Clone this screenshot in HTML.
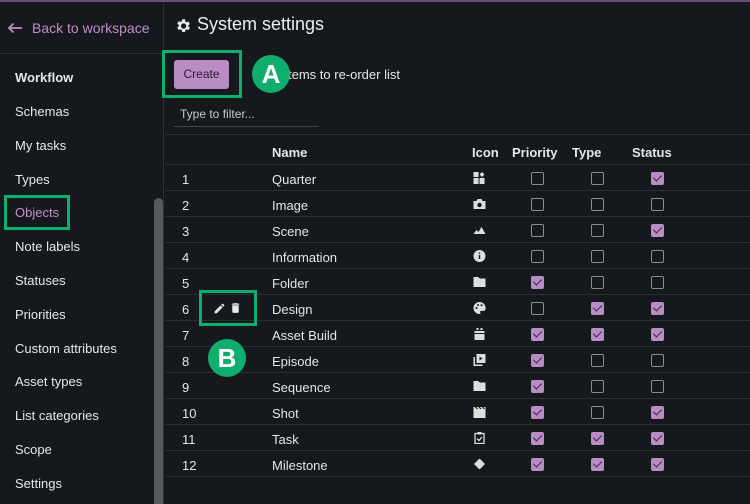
<!DOCTYPE html>
<html><head><style>
*{box-sizing:border-box;margin:0;padding:0}
body{width:750px;height:504px;background:#15181c;font-family:"Liberation Sans",sans-serif;color:#e6e6e6;position:relative;overflow:hidden;font-size:13px}
.a{position:absolute}
.top{left:0;top:0;width:750px;height:2px;background:#6b4f7a}
.side{left:0;top:2px;width:164px;height:502px;border-right:1px solid #2c3036}
.nav{left:15px;font-size:13px;color:#e8e8e8}
.hl{border:3px solid #0fae6e}
.circ{width:38px;height:38px;border-radius:50%;background:#0fae6e;color:#fff;font-size:26px;font-weight:bold;text-align:center;line-height:38px}
.row{left:165px;width:585px;height:26px;border-bottom:1px solid #2a2e34}
.row span{position:absolute;top:7px}
.cb{position:absolute;width:13px;height:13px;border:1.5px solid #8a8d92;border-radius:2px;top:7px}
.cb.on{background:#b98cc3;border-color:#b98cc3}
.cb.on:after{content:"";position:absolute;left:3px;top:0px;width:4px;height:7px;border:solid #3b2a40;border-width:0 1.5px 1.5px 0;transform:rotate(45deg)}
.ic{position:absolute;left:308px;top:7px;width:13px;height:12px}
</style></head><body>
<div class="a top"></div>
<div class="a side"></div>
<div class="a" style="left:0;top:53px;width:164px;height:1px;background:#2c3036"></div>
<svg class="a" style="left:7px;top:22px" width="16" height="12" viewBox="0 0 16 12"><path fill="none" stroke="#c08fc8" stroke-width="1.8" d="M15 6H2M6.5 1.5 2 6l4.5 4.5"/></svg>
<div class="a" style="left:32px;top:20px;color:#c08fc8;font-size:14px">Back to workspace</div>
<div class="a nav" style="top:70px;font-weight:bold">Workflow</div>
<div class="a nav" style="top:104px">Schemas</div>
<div class="a nav" style="top:138px">My tasks</div>
<div class="a nav" style="top:172px">Types</div>
<div class="a nav" style="top:205px;color:#c08fc8">Objects</div>
<div class="a hl" style="left:4px;top:195px;width:66px;height:35px"></div>
<div class="a nav" style="top:239px">Note labels</div>
<div class="a nav" style="top:273px">Statuses</div>
<div class="a nav" style="top:307px">Priorities</div>
<div class="a nav" style="top:341px">Custom attributes</div>
<div class="a nav" style="top:374px">Asset types</div>
<div class="a nav" style="top:408px">List categories</div>
<div class="a nav" style="top:442px">Scope</div>
<div class="a nav" style="top:476px">Settings</div>
<div class="a" style="left:154px;top:198px;width:9px;height:306px;background:#555a5f;border-radius:5px 5px 0 0"></div>

<svg class="a" style="left:174px;top:17px" width="18" height="18" viewBox="0 0 24 24"><path fill="#e6e6e6" d="M19.1 12.9a7 7 0 0 0 0-1.8l2.1-1.6-2-3.5-2.5 1a7 7 0 0 0-1.6-.9L14.8 3h-4l-.4 2.6a7 7 0 0 0-1.6.9l-2.5-1-2 3.5 2.1 1.6a7 7 0 0 0 0 1.8l-2.1 1.6 2 3.5 2.5-1a7 7 0 0 0 1.6.9l.4 2.6h4l.4-2.6a7 7 0 0 0 1.6-.9l2.5 1 2-3.5zM12.8 15.5a3.5 3.5 0 1 1 0-7 3.5 3.5 0 0 1 0 7z"/></svg>
<div class="a" style="left:197px;top:14px;font-size:18px;color:#eee">System settings</div>

<div class="a" style="left:174px;top:60px;width:55px;height:29px;background:#b98cc3;border-radius:3px;color:#2a2030;font-size:12px;text-align:center;line-height:29px">Create</div>
<div class="a hl" style="left:162px;top:50px;width:80px;height:48px"></div>
<div class="a" style="left:288px;top:67px;font-size:13px">tems to re-order list</div>
<div class="a circ" style="left:252px;top:55px">A</div>
<div class="a" style="left:180px;top:107px;font-size:12px;color:#c8c8c8">Type to filter...</div>
<div class="a" style="left:174px;top:126px;width:145px;height:1px;background:#444"></div>

<div class="a" style="left:165px;top:134px;width:585px;height:1px;background:#2a2e34"></div>
<div class="a row" style="top:139px;font-weight:bold"><span style="left:107px;top:6px">Name</span><span style="left:307px;top:6px">Icon</span><span style="left:347px;top:6px">Priority</span><span style="left:407px;top:6px">Type</span><span style="left:467px;top:6px">Status</span></div>

<div class="a row" style="top:165px"><span style="left:17px">1</span><span style="left:107px">Quarter</span><svg class="ic" viewBox="0 0 12 12"><path fill="#ddd" d="M0 0h5v5H0zM0 6h5v6H0zM6 6h5v6H6zM8.5 0 11 2.5 8.5 5 6 2.5z"/></svg><i class="cb" style="left:366px"></i><i class="cb" style="left:426px"></i><i class="cb on" style="left:486px"></i></div>
<div class="a row" style="top:191px"><span style="left:17px">2</span><span style="left:107px">Image</span><svg class="ic" viewBox="0 0 12 12"><path fill="#ddd" d="M0 3h3l1-2h4l1 2h3v8H0z"/><circle cx="6" cy="7" r="2.2" fill="#15181c"/></svg><i class="cb" style="left:366px"></i><i class="cb" style="left:426px"></i><i class="cb" style="left:486px"></i></div>
<div class="a row" style="top:217px"><span style="left:17px">3</span><span style="left:107px">Scene</span><svg class="ic" viewBox="0 0 12 12"><path fill="#ddd" d="M0 10l3-4 2 2 3-5 4 7z"/></svg><i class="cb" style="left:366px"></i><i class="cb" style="left:426px"></i><i class="cb on" style="left:486px"></i></div>
<div class="a row" style="top:243px"><span style="left:17px">4</span><span style="left:107px">Information</span><svg class="ic" viewBox="0 0 12 12"><circle cx="6" cy="6" r="6" fill="#ddd"/><path fill="#15181c" d="M5.3 5h1.4v4H5.3zM5.3 2.5h1.4v1.4H5.3z"/></svg><i class="cb" style="left:366px"></i><i class="cb" style="left:426px"></i><i class="cb" style="left:486px"></i></div>
<div class="a row" style="top:269px"><span style="left:17px">5</span><span style="left:107px">Folder</span><svg class="ic" viewBox="0 0 12 12"><path fill="#ddd" d="M0 1h5l1 1.5h6V11H0z"/></svg><i class="cb on" style="left:366px"></i><i class="cb" style="left:426px"></i><i class="cb" style="left:486px"></i></div>
<div class="a row" style="top:295px"><span style="left:17px">6</span><span style="left:107px">Design</span><svg class="ic" viewBox="0 0 12 12"><path fill="#ddd" d="M6 0a6 6 0 0 0 0 12c1 0 1.2-.8.8-1.5-.5-.8 0-1.6 1-1.6H10A2 2 0 0 0 12 7 6 6 0 0 0 6 0z"/><circle cx="3" cy="6" r="1" fill="#15181c"/><circle cx="4.5" cy="3" r="1" fill="#15181c"/><circle cx="8" cy="3.3" r="1" fill="#15181c"/></svg><i class="cb" style="left:366px"></i><i class="cb on" style="left:426px"></i><i class="cb on" style="left:486px"></i></div>
<div class="a row" style="top:321px"><span style="left:17px">7</span><span style="left:107px">Asset Build</span><svg class="ic" viewBox="0 0 12 12"><path fill="#ddd" d="M1 3h10v2H1zM1 6h10v6H1zM3 0h2v2H3zM7 0h2v2H7z"/></svg><i class="cb on" style="left:366px"></i><i class="cb on" style="left:426px"></i><i class="cb on" style="left:486px"></i></div>
<div class="a row" style="top:347px"><span style="left:17px">8</span><span style="left:107px">Episode</span><svg class="ic" viewBox="0 0 12 12"><path fill="#ddd" d="M0 3h1.5v7.5H9V12H0zM3 0h9v9H3z"/><path fill="#15181c" d="M6 2.5v4l3-2z"/></svg><i class="cb on" style="left:366px"></i><i class="cb" style="left:426px"></i><i class="cb" style="left:486px"></i></div>
<div class="a row" style="top:373px"><span style="left:17px">9</span><span style="left:107px">Sequence</span><svg class="ic" viewBox="0 0 12 12"><path fill="#ddd" d="M0 1h5l1 1.5h6V11H0z"/></svg><i class="cb on" style="left:366px"></i><i class="cb" style="left:426px"></i><i class="cb" style="left:486px"></i></div>
<div class="a row" style="top:399px"><span style="left:17px">10</span><span style="left:107px">Shot</span><svg class="ic" viewBox="0 0 12 12"><path fill="#ddd" d="M0 1h1.5l1.5 2h1.5L3 1h2l1.5 2H8L6.5 1h2L10 3h1.5L10 1h2v11H0z"/></svg><i class="cb on" style="left:366px"></i><i class="cb" style="left:426px"></i><i class="cb on" style="left:486px"></i></div>
<div class="a row" style="top:425px"><span style="left:17px">11</span><span style="left:107px">Task</span><svg class="ic" viewBox="0 0 12 12"><path fill="none" stroke="#ddd" stroke-width="1.3" d="M1.5 1.5h9v10h-9z"/><path fill="#ddd" d="M4 0h4v2.5H4z"/><path fill="none" stroke="#ddd" stroke-width="1.3" d="M3.5 6.5l2 2 3-3.5"/></svg><i class="cb on" style="left:366px"></i><i class="cb on" style="left:426px"></i><i class="cb on" style="left:486px"></i></div>
<div class="a row" style="top:451px"><span style="left:17px">12</span><span style="left:107px">Milestone</span><svg class="ic" viewBox="0 0 12 12"><path fill="#ddd" d="M6 0.5 11.5 6 6 11.5 0.5 6z"/></svg><i class="cb on" style="left:366px"></i><i class="cb on" style="left:426px"></i><i class="cb on" style="left:486px"></i></div>

<svg class="a" style="left:213px;top:302px" width="13" height="13" viewBox="0 0 24 24"><path fill="#e6e6e6" d="M3 17.25V21h3.75L17.8 9.94l-3.75-3.75zM20.7 7.04a1 1 0 0 0 0-1.41l-2.34-2.34a1 1 0 0 0-1.41 0l-1.83 1.83 3.75 3.75z"/></svg>
<svg class="a" style="left:229px;top:301px" width="13" height="14" viewBox="0 0 24 24"><path fill="#e6e6e6" d="M6 19a2 2 0 0 0 2 2h8a2 2 0 0 0 2-2V7H6zM19 4h-3.5l-1-1h-5l-1 1H5v2h14z"/></svg>
<div class="a hl" style="left:199px;top:290px;width:58px;height:36px"></div>
<div class="a circ" style="left:208px;top:339px">B</div>
</body></html>
